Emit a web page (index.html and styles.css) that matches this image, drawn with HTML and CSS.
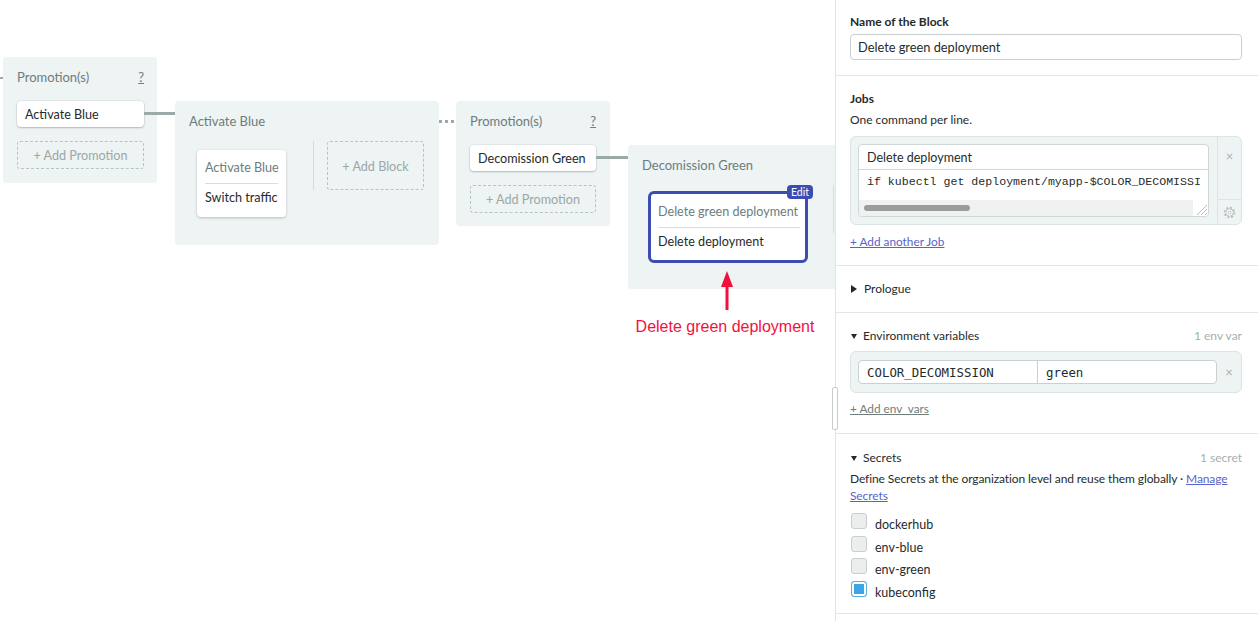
FILE: index.html
```html
<!DOCTYPE html>
<html lang="en">
<head>
<meta charset="utf-8">
<title>Workflow editor</title>
<link rel="stylesheet" href="styles.css">
</head>
<body>
<div class="app">
  <main class="canvas">
    <div class="wire stub"></div>

    <section class="card promo p1">
      <div class="card-title"><span>Promotion(s)</span><span class="help">?</span></div>
      <div class="promo-btn">Activate Blue</div>
      <div class="add-promo">+ Add Promotion</div>
    </section>
    <div class="wire w1"></div>

    <section class="card pipeline b1">
      <div class="card-title"><span>Activate Blue</span></div>
      <div class="block-row">
        <div class="block">
          <div class="block-name">Activate Blue</div>
          <div class="block-sep"></div>
          <div class="block-job">Switch traffic</div>
        </div>
        <div class="col-sep"></div>
        <div class="add-block">+ Add Block</div>
      </div>
    </section>
    <div class="wire dotted w2"></div>

    <section class="card promo p2">
      <div class="card-title"><span>Promotion(s)</span><span class="help">?</span></div>
      <div class="promo-btn">Decomission Green</div>
      <div class="add-promo">+ Add Promotion</div>
    </section>
    <div class="wire w3"></div>

    <section class="card pipeline b2">
      <div class="card-title"><span>Decomission Green</span></div>
      <div class="block-row">
        <div class="block selected">
          <span class="edit-badge">Edit</span>
          <div class="block-name">Delete green deployment</div>
          <div class="block-sep"></div>
          <div class="block-job">Delete deployment</div>
        </div>
        <div class="col-sep tall"></div>
      </div>
    </section>

    <div class="annotation">
      <svg class="arrow" width="14" height="39" viewBox="0 0 14 39">
        <polygon points="7,0 13,16 1,16" fill="#f2113d"/>
        <rect x="5.5" y="14" width="3" height="25" fill="#f2113d"/>
      </svg>
      <div class="annotation-text">Delete green deployment</div>
    </div>
  </main>

  <aside class="panel">
    <div class="section sec-name">
      <div class="label">Name of the Block</div>
      <div class="input">Delete green deployment</div>
    </div>

    <div class="section sec-jobs">
      <div class="label">Jobs</div>
      <div class="hint">One command per line.</div>
      <div class="job-box">
        <div class="job-main">
          <div class="job-card">
            <div class="job-name">Delete deployment</div>
            <div class="job-code">
              <div class="code-line">if kubectl get deployment/myapp-$COLOR_DECOMISSI</div>
              <div class="hscroll">
                <div class="hscroll-track"><div class="hscroll-thumb"></div></div>
                <svg class="grip" width="15" height="16" viewBox="0 0 15 16">
                  <line x1="4" y1="15" x2="14" y2="5" stroke="#b8bdbd" stroke-width="1"/>
                  <line x1="8" y1="15" x2="14" y2="9" stroke="#b8bdbd" stroke-width="1"/>
                  <line x1="12" y1="15" x2="14" y2="13" stroke="#b8bdbd" stroke-width="1"/>
                </svg>
              </div>
            </div>
          </div>
        </div>
        <div class="job-side">
          <div class="side-top"><span class="close">×</span></div>
          <div class="side-bottom">
            <svg width="13" height="13" viewBox="0 0 14 14">
              <circle cx="7" cy="7" r="5.3" fill="none" stroke="#b3bcbb" stroke-width="1.8" stroke-dasharray="2.1 2.06"/>
              <circle cx="7" cy="7" r="4.1" fill="#fff" stroke="#b3bcbb" stroke-width="1"/>
              <circle cx="7" cy="7" r="1.7" fill="none" stroke="#b3bcbb" stroke-width="1"/>
            </svg>
          </div>
        </div>
      </div>
      <a class="link" href="#">+ Add another Job</a>
    </div>

    <div class="section sec-prologue">
      <div class="toggle"><span class="tri-right"></span>Prologue</div>
    </div>

    <div class="section sec-env">
      <div class="head-row">
        <div class="toggle"><span class="tri-down"></span>Environment variables</div>
        <span class="count">1 env var</span>
      </div>
      <div class="env-box">
        <div class="env-fields">
          <div class="env-key">COLOR_DECOMISSION</div>
          <div class="env-val">green</div>
        </div>
        <span class="close env-close">×</span>
      </div>
      <a class="link muted" href="#">+ Add env_vars</a>
    </div>

    <div class="section sec-secrets">
      <div class="head-row">
        <div class="toggle"><span class="tri-down"></span>Secrets</div>
        <span class="count">1 secret</span>
      </div>
      <p class="desc">Define Secrets at the organization level and reuse them globally · <a class="link" href="#">Manage<br>Secrets</a></p>
      <ul class="secret-list">
        <li><span class="check"></span>dockerhub</li>
        <li><span class="check"></span>env-blue</li>
        <li><span class="check"></span>env-green</li>
        <li><span class="check on"></span>kubeconfig</li>
      </ul>
    </div>
  </aside>

  <div class="resize-handle"></div>
</div>
</body>
</html>
```

FILE: styles.css
```css
* { box-sizing: border-box; }

body {
  margin: 0;
  font-family: Lato, "Noto Sans", sans-serif;
  font-size: 12.6px;
  color: #1f2b2b;
  background: #fff;
}

.app {
  position: relative;
  display: flex;
  width: 1258px;
  height: 621px;
  overflow: hidden;
}

/* ---------- canvas ---------- */
.canvas {
  position: relative;
  flex: 0 0 835px;
  height: 621px;
  overflow: hidden;
}

.card {
  position: absolute;
  background: #eef3f3;
  border-radius: 4px;
}

.card-title {
  display: flex;
  justify-content: space-between;
  color: #6d7d7c;
  font-size: 13px;
  line-height: 16px;
}

.help { text-decoration: underline; }

.promo { display: flex; flex-direction: column; }
.p1 { left: 3px; top: 57px; width: 154px; height: 126px; padding: 12px 13px 0 14px; }
.p2 { left: 456px; top: 101px; width: 154px; height: 125px; padding: 12px 14px 0 14px; }

.promo-btn {
  margin-top: 16px;
  height: 26px;
  line-height: 28px;
  padding: 0 8px;
  background: #fff;
  border-radius: 4px;
  box-shadow: 0 1px 2px rgba(0, 0, 0, 0.22), 0 0 0 1px rgba(0, 0, 0, 0.04);
  white-space: nowrap;
  overflow: hidden;
}

.add-promo {
  margin-top: 14px;
  height: 28px;
  line-height: 28px;
  border: 1px dashed #b9c3c2;
  border-radius: 3px;
  text-align: center;
  color: #9ba8a7;
}

.pipeline { padding: 12px 0 0 14px; }
.b1 { left: 175px; top: 101px; width: 264px; height: 144px; }
.b2 { left: 628px; top: 145px; width: 260px; height: 144px; }

.block-row {
  display: flex;
  align-items: flex-start;
  margin-top: 12px;
}

.b1 .block-row { padding-left: 8px; }

.block {
  position: relative;
  width: 89px;
  background: #fff;
  border-radius: 4px;
  box-shadow: 0 1px 3px rgba(0, 0, 0, 0.22);
  padding: 9px 8px 10px 8px;
  margin-top: 9px;
  line-height: 18px;
  white-space: nowrap;
}

.block-name { color: #6d7d7c; }
.block-sep { height: 1px; background: #d7dfde; margin: 6px 0 5px; }
.block-job { color: #1f2b2b; }

.col-sep {
  width: 1px;
  height: 49px;
  background: #d5dddc;
  margin-left: 27px;
}

.add-block {
  margin-left: 13px;
  width: 97px;
  height: 49px;
  line-height: 49px;
  border: 1px dashed #b9c3c2;
  border-radius: 3px;
  text-align: center;
  color: #9ba8a7;
}

.block.selected {
  margin-left: 6px;
  margin-top: 6px;
  width: 160px;
  height: 72px;
  border: 3px solid #3c4cb3;
  border-radius: 6px;
  box-shadow: none;
  padding: 9px 5px 0 7px;
}

.edit-badge {
  position: absolute;
  top: -9px;
  right: -8px;
  width: 26px;
  height: 14px;
  line-height: 14px;
  border-radius: 4px;
  background: #3c4cb3;
  color: #fff;
  font-size: 10.5px;
  text-align: center;
}

.col-sep.tall { height: 48px; margin-left: 25px; }

.wire {
  position: absolute;
  height: 3px;
  background: #9aaaa9;
}
.stub { left: 0; top: 77px; width: 3px; height: 2px; }
.w1 { left: 144px; top: 112px; width: 31px; }
.w3 { left: 596px; top: 156px; width: 32px; }
.dotted {
  background: repeating-linear-gradient(to right, #9aaaa9 0 3px, transparent 3px 6px);
}
.w2 { left: 439px; top: 120px; width: 17px; }

.annotation {
  position: absolute;
  left: 598px;
  top: 271px;
  width: 254px;
  display: flex;
  flex-direction: column;
  align-items: center;
}
.arrow { display: block; margin-left: 3px; }
.annotation-text {
  margin-top: 8px;
  font-family: "Liberation Sans", Arial, sans-serif;
  font-size: 16px;
  line-height: 18px;
  color: #f2113d;
  white-space: nowrap;
}

/* ---------- panel ---------- */
.panel {
  flex: 0 0 423px;
  height: 621px;
  border-left: 1px solid #dfe5e5;
  overflow: hidden;
}

.section {
  padding: 0 16px 0 14px;
  border-bottom: 1px solid #e1e7e7;
}

.label {
  font-weight: 700;
  font-size: 12px;
  line-height: 18px;
}

.sec-name { padding-top: 13px; padding-bottom: 15px; }
.sec-name .label { margin-bottom: 3px; }

.input {
  height: 26px;
  line-height: 25px;
  padding: 0 7px;
  border: 1px solid #c8d0d0;
  border-radius: 4px;
  font-size: 12.8px;
  white-space: nowrap;
}

.sec-jobs { padding-top: 14px; padding-bottom: 14px; }
.hint { margin-top: 3px; line-height: 18px; font-size: 12px; }

.job-box {
  display: flex;
  margin-top: 7px;
  height: 89px;
  background: #eef3f3;
  border: 1px solid #dde4e4;
  border-radius: 6px;
}

.job-main { flex: 1; padding: 7px 8px 7px 7px; min-width: 0; }

.job-card {
  height: 73px;
  background: #fff;
  border: 1px solid #cfd7d7;
  border-radius: 4px;
  overflow: hidden;
  display: flex;
  flex-direction: column;
}

.job-name {
  height: 25px;
  line-height: 26px;
  padding-left: 8px;
  border-bottom: 1px solid #cfd7d7;
  font-size: 12.5px;
  flex: none;
  overflow: hidden;
}

.job-code {
  flex: 1;
  display: flex;
  flex-direction: column;
  justify-content: space-between;
}

.code-line {
  padding: 4px 0 0 8px;
  white-space: nowrap;
  font-family: "Liberation Mono", "Courier New", monospace;
  font-size: 11.6px;
  line-height: 16px;
  color: #1f2b2b;
}

.hscroll { display: flex; height: 16px; }
.hscroll-track {
  flex: 1;
  background: #f0f1f1;
  padding: 5px 0 0 5px;
}
.hscroll-thumb {
  width: 106px;
  height: 6px;
  border-radius: 3px;
  background: #9b9d9d;
}
.grip { display: block; background: #fff; }

.job-side {
  flex: 0 0 24px;
  display: flex;
  flex-direction: column;
  border-left: 1px solid #dde4e4;
}
.side-top {
  height: 63px;
  border-bottom: 1px solid #dde4e4;
  text-align: center;
  padding-top: 11px;
}
.side-bottom {
  flex: 1;
  display: flex;
  align-items: center;
  justify-content: center;
}

.close {
  color: #a9b3b2;
  font-size: 13px;
  line-height: 16px;
}

.link {
  display: inline-block;
  color: #5a63c8;
  text-decoration: underline;
  line-height: 18px;
  font-size: 11.8px;
}
.sec-jobs > .link { margin-top: 8px; }
.link.muted { color: #6e7e7d; }

.toggle {
  display: flex;
  align-items: center;
  line-height: 18px;
  font-size: 12px;
}
.tri-right {
  width: 0; height: 0;
  border-left: 6px solid #1f2b2b;
  border-top: 4px solid transparent;
  border-bottom: 4px solid transparent;
  margin: 0 7px 0 1px;
}
.tri-down {
  width: 0; height: 0;
  border-top: 5px solid #1f2b2b;
  border-left: 3.5px solid transparent;
  border-right: 3.5px solid transparent;
  margin: 0 6px 0 1px;
}

.sec-prologue { padding-top: 14px; padding-bottom: 14px; }

.head-row {
  display: flex;
  justify-content: space-between;
  align-items: center;
}
.count { color: #a6b0af; font-size: 12px; line-height: 18px; }

.sec-env { padding-top: 14px; padding-bottom: 15px; }

.env-box {
  display: flex;
  align-items: center;
  margin-top: 6px;
  height: 42px;
  padding: 8px 0 8px 7px;
  background: #eef3f3;
  border: 1px solid #dde4e4;
  border-radius: 6px;
}
.env-fields {
  display: flex;
  width: 359px;
  height: 24px;
  background: #fff;
  border: 1px solid #c8d0d0;
  border-radius: 4px;
  font-family: "DejaVu Sans Mono", monospace;
  font-size: 12.4px;
  line-height: 23px;
}
.env-key { width: 179px; padding-left: 8px; border-right: 1px solid #c8d0d0; }
.env-val { flex: 1; padding-left: 8px; }
.env-close { flex: 1; text-align: center; }
.sec-env > .link { margin-top: 7px; }

.sec-secrets { padding-top: 15px; padding-bottom: 10px; }
.desc {
  margin: 3px 0 0;
  line-height: 17px;
  font-size: 12px;
  letter-spacing: -0.1px;
  white-space: nowrap;
}
.desc .link { display: inline; line-height: 17px; font-size: 12px; }

.secret-list {
  list-style: none;
  margin: 9px 0 0;
  padding: 0;
  font-size: 12.5px;
}
.secret-list li {
  display: flex;
  align-items: flex-start;
  height: 22.6px;
  line-height: 24px;
}
.check {
  flex: none;
  width: 16px;
  height: 16px;
  margin: 0 8px 0 1px;
  border: 1px solid #c9cfcf;
  border-radius: 3px;
  background: #eceeee;
}
.check.on {
  border: 1.5px solid #5aaee6;
  background: #3aa6e8;
  box-shadow: inset 0 0 0 2px #fff;
}

/* overlay handle on the panel edge */
.resize-handle {
  position: absolute;
  left: 832px;
  top: 387px;
  width: 6px;
  height: 43px;
  background: #fff;
  border: 1px solid #c5cccc;
  border-radius: 2px;
}
```
